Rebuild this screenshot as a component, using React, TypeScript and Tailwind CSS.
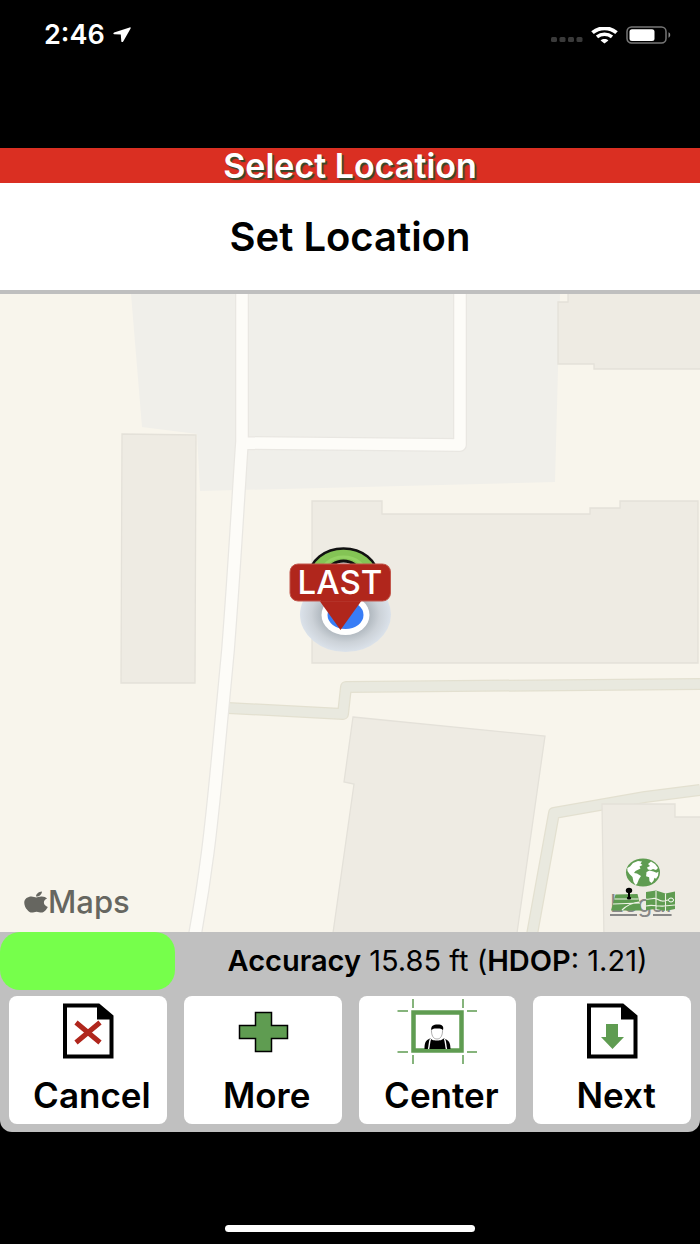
import type { ReactNode } from "react";
import { FaApple } from "react-icons/fa6";

function StatusBar() {
  return (
    <div className="flex h-[148px] items-start justify-between pt-5 pr-7 pl-11 text-white">
      <div className="flex h-[30px] items-center gap-2">
        <span className="text-[27px] font-semibold">2:46</span>
        <svg width="18" height="16" viewBox="0 0 18 16" fill="currentColor">
          <path d="M16.6 0.4 1.1 5.6c-1 .4-1 1.6.1 1.7l6.6.3.5 6.6c.1 1.1 1.4 1.2 1.9.2l7.4-12.8c.4-.8-.2-1.5-.9-1.2Z" />
        </svg>
      </div>
      <div className="flex h-[30px] items-center gap-2">
        <svg width="32" height="16" viewBox="0 0 32 16" fill="#3a3a3a">
          <rect x="0" y="10" width="6" height="5" rx="1.5" />
          <rect x="8.5" y="10" width="6" height="5" rx="1.5" />
          <rect x="17" y="10" width="6" height="5" rx="1.5" />
          <rect x="25.5" y="10" width="6" height="5" rx="1.5" />
        </svg>
        <svg width="27" height="17" viewBox="0 0 27 17" fill="none" stroke="#fff">
          <path d="M1.5 5.7C8-.2 19-.2 25.5 5.7" strokeWidth="3.8" />
          <path d="M6 9.9c4.3-3.6 10.7-3.6 15 0" strokeWidth="3.4" />
          <path d="M9.6 13.4c2.2-1.9 5.600-1.9 7.8 0L13.5 16.6Z" fill="#fff" stroke="none" />
        </svg>
        <svg width="46" height="18" viewBox="0 0 46 18">
          <rect x="1" y="1" width="39" height="16" rx="4.5" fill="none" stroke="#777" strokeWidth="1.5" />
          <rect x="3.5" y="3.2" width="25" height="11.8" rx="2.5" fill="#fff" />
          <path d="M42.5 6.3c2.3.8 2.3 4.6 0 5.4Z" fill="#888" />
        </svg>
      </div>
    </div>
  );
}

function MapCanvas() {
  return (
    <svg
      className="absolute inset-0 h-full w-full"
      viewBox="0 294 700 638"
      preserveAspectRatio="xMidYMid slice"
    >
      <defs>
        <radialGradient id="halo">
          <stop offset="0.5" stopColor="#aeb6bd" />
          <stop offset="0.75" stopColor="#ccd2d8" />
          <stop offset="1" stopColor="#dbe2ea" />
        </radialGradient>
      </defs>
      <rect x="0" y="294" width="700" height="638" fill="#f8f5ec" />
      <path d="M131 294 142 427 197 434 200 491 555 482 560 294Z" fill="#f0efea" />

      {/* footpaths */}
      <g fill="none" strokeLinejoin="round">
        <path
          d="M228 708 343 714 346 687 700 684M531 940 554 813 645 797 700 790"
          stroke="#e3e0d0"
          strokeWidth="12"
        />
        <path
          d="M228 708 343 714 346 687 700 684M531 940 554 813 645 797 700 790"
          stroke="#e9e9df"
          strokeWidth="9.5"
        />
      </g>

      {/* buildings */}
      <g fill="#eeebe3" stroke="#e4e1d9" strokeWidth="1.3">
        <path d="M122 434 196 435 195 683 121 683Z" />
        <path d="M568 290V302H558V364H594V369H710V290Z" />
        <path d="M312 501H382V514H590V508H620V501H698V663H312Z" />
        <path d="M353 717 545 736 516 940H332L354 784 344 782Z" />
        <path d="M602 804H675V817H710V940H604Z" />
      </g>

      {/* roads */}
      <g fill="none" strokeLinejoin="round">
        <path
          d="M242 285V442C238 500 235 560 228 650L218 756C211 830 206 875 194 940M242 443 460 445V285"
          stroke="#e9e7e2"
          strokeWidth="14"
        />
        <path
          d="M242 285V442C238 500 235 560 228 650L218 756C211 830 206 875 194 940M242 443 460 445V285"
          stroke="#fdfcf8"
          strokeWidth="11.5"
        />
      </g>

      {/* current position and last recorded pin */}
      <ellipse cx="345.5" cy="614.5" rx="45.5" ry="37.5" fill="url(#halo)" />
      <ellipse cx="345.5" cy="615" rx="24" ry="20" fill="#fff" />
      <ellipse cx="345.5" cy="615" rx="18" ry="14" fill="#387df6" />
      <ellipse cx="343.5" cy="576" rx="34" ry="27.5" fill="#84c455" stroke="#111" strokeWidth="2.5" />
      <ellipse cx="343.5" cy="576" rx="23" ry="19" fill="none" stroke="#94d264" strokeWidth="3" />
      <ellipse cx="343.5" cy="572" rx="15" ry="11" fill="#ddd" stroke="#111" strokeWidth="3" />
      <path d="M319 600H362L340.5 630Z" fill="#b0261c" />
      <rect x="290" y="564" width="100.5" height="37" rx="8" fill="#b0261c" stroke="#c2574c" strokeWidth="1" />
      <path d="M321 600.5H360" stroke="#b0261c" strokeWidth="2" />
      <text
        x="340"
        y="594"
        textAnchor="middle"
        fill="#fff"
        className="font-['Inter',sans-serif] text-[33px] font-medium"
      >
        LAST
      </text>
    </svg>
  );
}

function MapTypeIcon() {
  return (
    <svg width="66" height="58" viewBox="0 0 66 58">
      <ellipse cx="33" cy="14.5" rx="17" ry="14" fill="#5f9c51" />
      <g fill="#fff">
        <path d="M20 8.500 23 5l5-2 4 .5-1.500 2 2 1.500-3 1.500 1 2-3 1.500-2 1-1.500 2 3 .5 4 2.500-2 3-2 5-1.500 1-2-3-1-5-3-3-2-3-.2-3Z" />
        <path d="m38 6 3-2.500 4 2.500 3 4-2 2-3-1-2 1-3-.5-1-2 3-1.500Z" />
        <path d="m36.500 14 3-1.500 4 1 3 1.200 2-1-.5 4-2 3-1.500-1-1 3-2 2.200-2-1.700-.4-4-3-1Z" />
      </g>
      <path d="m5.500 36.500 22-.5 4 16.500H1Z" fill="#5f9c51" />
      <path d="M4.500 41h24M3 46l27-1M12 52c5-5 9-7 17-8" fill="none" stroke="#eef2e5" strokeWidth="1.2" />
      <path d="m36 34 10-1.500 9.500 3 9.500-2v17.500l-9.500 2-9.500-2-10 1Z" fill="#5f9c51" />
      <path
        d="M46 33v19M55.500 35.500v17.500M36 41c5 1 7-2 11 0s5 3 11 1M36 48c7-2 12 1 18 0l11-1"
        fill="none"
        stroke="#eef2e5"
        strokeWidth="1.1"
      />
      <ellipse cx="61" cy="42" rx="2.5" ry="2" fill="#5f9c51" stroke="#fff" />
      <ellipse cx="19" cy="32.5" rx="3.2" ry="2.8" />
      <path d="M19 33v7" stroke="#000" strokeWidth="2" />
      <ellipse cx="19" cy="40" rx="2.2" ry="1.5" />
    </svg>
  );
}

function PageIcon({ children }: { children: ReactNode }) {
  return (
    <svg width="80" height="66" viewBox="0 0 80 66">
      <path d="M17 9.500H50.500L63.500 20.500V60.500H17Z" fill="#fff" stroke="#000" strokeWidth="4" />
      <path d="M49 8 65 20.500V23.500H49Z" />
      {children}
    </svg>
  );
}

const actions = [
  {
    label: "Cancel",
    icon: (
      <PageIcon>
        <path d="M28 26.500 52 46.500M52 26.500 28 46.500" stroke="#b0261c" strokeWidth="5" />
      </PageIcon>
    ),
  },
  {
    label: "More",
    icon: (
      <svg width="80" height="66" viewBox="0 0 80 66">
        <path
          d="M32.500 16.500H48.500V29.500H64.500V42.500H48.500V55.500H32.500V42.500H16.500V29.500H32.500Z"
          fill="#5f9c51"
          stroke="#000"
          strokeWidth="1.5"
        />
      </svg>
    ),
  },
  {
    label: "Center",
    icon: (
      <svg width="80" height="68" viewBox="0 0 80 68">
        <path
          d="M16 3v9M66 3v9M16 59v9M66 59v9M.5 15H11M70 15h10M.5 56H11M70 56h10"
          stroke="#5f9c51"
          strokeWidth="1.5"
        />
        <rect x="16.5" y="16.5" width="48" height="38" fill="#fff" stroke="#5f9c51" strokeWidth="4.5" />
        <path d="M34.500 32c-.5 8 2 11 5.500 11s6-3 5.500-11" fill="#fff" stroke="#999" strokeWidth="0.8" />
        <path d="M34.500 34c-1-4 2-5.500 6-5.500 5 0 6.500 2 5.500 5.500-2-2-5-1.500-7-1.500s-3 0-4.500 1.500Z" />
        <path d="M27.500 53c0-6 1-9 5.500-10.500 2 1 2.500 2 7 2s5-1 7-2C52 44 53.500 47 53.500 53Z" />
        <path d="M33.500 43c-1.500 3-1 7-2 10M47.500 43c1.500 3 1 7 2 10" fill="none" stroke="#fff" strokeWidth="1.4" />
      </svg>
    ),
  },
  {
    label: "Next",
    icon: (
      <PageIcon>
        <path d="M34 28H46V41H52L40.500 53 29 41H34Z" fill="#5f9c51" />
      </PageIcon>
    ),
  },
];

export default function App() {
  return (
    <div className="flex min-h-screen flex-col bg-black font-['Inter','Liberation_Sans',sans-serif] text-black">
      <StatusBar />

      <header className="border-b-4 border-[#bfbfbf] bg-white text-center">
        <div className="bg-[#da2f22] text-[34px] leading-[35px] font-semibold text-white [text-shadow:2px_2px_1px_#34482a]">
          Select Location
        </div>
        <h1 className="py-8 text-[40px] leading-[43px] font-semibold">Set Location</h1>
      </header>

      <main className="relative min-h-96 flex-1 overflow-hidden">
        <MapCanvas />
        <div className="absolute bottom-3 left-6 flex items-center text-[31px] leading-9 font-medium text-[#666660]">
          <FaApple className="size-6" preserveAspectRatio="none" />
          <span>Maps</span>
        </div>
        <div className="absolute right-6 bottom-4">
          <a href="#legal" className="absolute bottom-0 left-0 text-2xl leading-6 text-[#888] underline">
            Legal
          </a>
          <button type="button" aria-label="Change map type" className="relative block">
            <MapTypeIcon />
          </button>
        </div>
      </main>

      <footer className="rounded-b-xl bg-[#c0c0c0] pb-2">
        <div className="grid h-[58px] grid-cols-4 items-center">
          <div className="h-full rounded-[20px] bg-[#76ff4b]" />
          <p className="col-span-3 text-center text-[29px] whitespace-nowrap">
            <b className="font-semibold">Accuracy</b> 15.85 ft (<b className="font-semibold">HDOP</b>: 1.21)
          </p>
        </div>
        <div className="mt-1.5 grid grid-cols-4 gap-[17px] px-[9px]">
          {actions.map((action) => (
            <button
              key={action.label}
              type="button"
              className="flex h-32 flex-col items-center rounded-lg bg-white text-[35px] font-semibold"
            >
              <span className="h-[66px]">{action.icon}</span>
              <span className="pl-2 leading-[66px]">{action.label}</span>
            </button>
          ))}
        </div>
      </footer>

      <div className="flex h-28 items-end justify-center pb-3">
        <div className="h-[7px] w-[250px] rounded-full bg-white" />
      </div>
    </div>
  );
}
